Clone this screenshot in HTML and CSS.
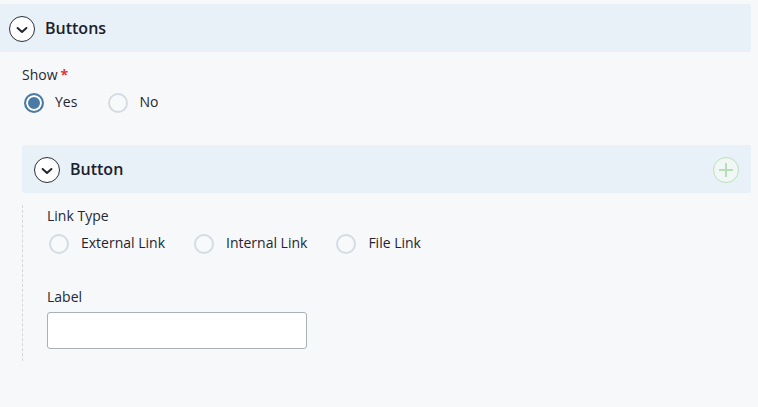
FILE: index.html
```html
<!DOCTYPE html>
<html lang="en">
<head>
<meta charset="utf-8">
<title>Buttons</title>
<link rel="stylesheet" href="styles.css">
</head>
<body>
<main class="page">
  <header class="bar">
    <span class="toggle"><svg viewBox="0 0 26 26" width="26" height="26"><circle cx="13" cy="13" r="12.5" fill="#fff" stroke="#2b2f36"/><path d="M8.6 12 13 16 17.4 12" fill="none" stroke="#23272e" stroke-width="2" stroke-linecap="round" stroke-linejoin="round"/></svg></span>
    <h2 class="bar-title">Buttons</h2>
  </header>
  <section class="show">
    <div class="field-label">Show<span class="req">*</span></div>
    <div class="radios radios-show">
      <label class="radio"><span class="dot dot-on"></span>Yes</label>
      <label class="radio"><span class="dot"></span>No</label>
    </div>
  </section>
  <section class="nested">
    <header class="bar bar-nested">
      <span class="toggle"><svg viewBox="0 0 26 26" width="26" height="26"><circle cx="13" cy="13" r="12.5" fill="#fff" stroke="#2b2f36"/><path d="M8.6 12 13 16 17.4 12" fill="none" stroke="#23272e" stroke-width="2" stroke-linecap="round" stroke-linejoin="round"/></svg></span>
      <h3 class="bar-title">Button</h3>
      <span class="add"><svg viewBox="0 0 26 26" width="26" height="26"><circle cx="13" cy="13" r="12.5" fill="#f1f7f5" stroke="#b9e0be"/><path d="M13 6V20M6 13H20" fill="none" stroke="#b4dfb9" stroke-width="2"/></svg></span>
    </header>
    <div class="nested-body">
      <div class="field-label">Link Type</div>
      <div class="radios radios-link">
        <label class="radio"><span class="dot"></span>External Link</label>
        <label class="radio"><span class="dot"></span>Internal Link</label>
        <label class="radio"><span class="dot"></span>File Link</label>
      </div>
      <label class="field-label label-gap" for="label-input">Label</label>
      <input class="text-input" id="label-input" type="text">
    </div>
  </section>
</main>
</body>
</html>
```
FILE: styles.css
```css
* { box-sizing: border-box; }
html, body { margin: 0; height: 100%; }
body {
  background: #f7f8fa;
  color: #1f2530;
  font-family: "Open Sans", sans-serif;
  font-size: 14px;
  overflow: hidden;
}
.page { width: 751px; padding-top: 4px; }
.bar {
  display: flex;
  align-items: center;
  height: 48px;
  padding-left: 9px;
  background: #e9f1f8;
  border-radius: 2px;
}
.bar-nested { padding-left: 12px; }
.toggle, .add { display: flex; flex: none; margin-top: 2px; }
.bar-title {
  margin: 0 0 0 10px;
  font-size: 16px;
  line-height: 22px;
  font-weight: 600;
  color: #1c2028;
}
.add { margin-left: auto; margin-right: 12px; }
.show { padding: 13px 0 0 22px; }
.field-label {
  display: block;
  line-height: 20px;
  color: #232935;
}
.req { color: #e8303a; margin-left: 3px; font-size: 14px; font-weight: 700; line-height: 14px; }
.radios { display: flex; align-items: center; height: 24px; margin-top: 5px; }
.radios-show { margin-left: 2px; gap: 31px; }
.radios-link { margin-left: 2px; gap: 29px; }
.radio { display: flex; align-items: center; line-height: 20px; }
.dot {
  flex: none;
  width: 20px;
  height: 20px;
  margin-top: 2px;
  margin-right: 11px;
  border: 2px solid #d5dbe2;
  border-radius: 50%;
  background: #f8f9fb;
}
.radios-link .dot { margin-right: 12px; }
.dot-on {
  border-color: #4a7ba6;
  background: #4a7ba6;
  box-shadow: inset 0 0 0 2px #fff;
}
.nested { margin: 31px 0 0 22px; }
.nested-body {
  margin-top: 12px;
  height: 156px;
  padding: 1px 0 0 24px;
  border-left: 1px dashed #d3d6da;
}
.label-gap { margin-top: 32px; }
.text-input {
  display: block;
  width: 260px;
  height: 37px;
  margin-top: 5px;
  background: #fff;
  border: 1px solid #a9b0b7;
  border-radius: 3px;
}
```
